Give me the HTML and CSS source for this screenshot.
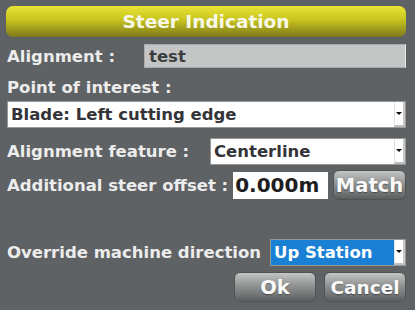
FILE: index.html
```html
<!DOCTYPE html>
<html>
<head>
<title>Steer Indication</title>
<link rel="stylesheet" href="styles.css">
</head>
<body>
<div class="dialog">
    <div class="title">Steer Indication</div>

    <div class="row row-alignment">
        <span class="label label-alignment">Alignment :</span>
        <span class="readonly">test</span>
    </div>

    <div class="label caption">Point of interest :</div>
    <div class="combo combo-full">
        <span class="combo-text">Blade: Left cutting edge</span>
        <span class="combo-arrow"></span>
    </div>

    <div class="row row-feature">
        <span class="label">Alignment feature :</span>
        <div class="combo combo-feature">
            <span class="combo-text">Centerline</span>
            <span class="combo-arrow"></span>
        </div>
    </div>

    <div class="row row-offset">
        <span class="label">Additional steer offset :</span>
        <span class="field">0.000m</span>
        <span class="button button-match">Match</span>
    </div>

    <div class="row row-override">
        <span class="label">Override machine direction</span>
        <div class="combo combo-direction">
            <span class="combo-text">Up Station</span>
            <span class="combo-arrow"></span>
        </div>
    </div>

    <div class="row row-buttons">
        <span class="button button-ok">Ok</span>
        <span class="button button-cancel">Cancel</span>
    </div>
</div>
</body>
</html>
```

FILE: styles.css
```css
html, body {
    margin: 0;
    padding: 0;
}

body {
    width: 415px;
    height: 310px;
    background-color: rgb(95, 98, 100);
    font-family: "DejaVu Sans", sans-serif;
    font-weight: bold;
    font-size: 16.5px;
    color: rgb(236, 236, 236);
    overflow: hidden;
}

.dialog {
    padding: 6px 9px 0 7px;
}

.title {
    height: 31px;
    line-height: 31px;
    margin-left: -1px;
    text-align: center;
    font-size: 18.5px;
    color: rgb(248, 248, 232);
    border-radius: 7px;
    background: linear-gradient(to bottom, rgb(234, 228, 52) 0%, rgb(200, 196, 30) 45%, rgb(124, 120, 28) 100%);
}

.row {
    display: flex;
    align-items: center;
}

.row-alignment {
    margin-top: 7px;
    height: 24px;
}

.label {
    white-space: nowrap;
}

.label-alignment {
    width: 137px;
}

.readonly {
    flex: 1;
    height: 24px;
    line-height: 23px;
    padding-left: 4px;
    box-sizing: border-box;
    background-color: rgb(196, 198, 198);
    border: 1px solid rgb(170, 172, 172);
    border-right-color: rgb(230, 232, 232);
    color: rgb(60, 62, 64);
}

.caption {
    margin-top: 9px;
    height: 22px;
    line-height: 22px;
}

.combo {
    display: flex;
    height: 27px;
    box-sizing: border-box;
    background-color: rgb(255, 255, 255);
    border: 1px solid rgb(150, 152, 152);
    color: rgb(52, 52, 56);
}

.combo-text {
    flex: 1;
    line-height: 25px;
    padding-left: 3px;
    white-space: nowrap;
}

.combo-arrow {
    width: 8px;
    position: relative;
    border-left: 1px solid rgb(225, 225, 225);
    border-right: 2px solid rgb(200, 200, 200);
    border-bottom: 2px solid rgb(190, 190, 190);
}

.combo-arrow::after {
    content: "";
    position: absolute;
    left: 1px;
    top: 10px;
    border-left: 3px solid transparent;
    border-right: 3px solid transparent;
    border-top: 3px solid rgb(10, 10, 10);
}

.combo-full {
    margin-top: 2px;
}

.row-feature {
    margin-top: 10px;
    justify-content: space-between;
}

.combo-feature {
    width: 196px;
}

.row-offset {
    margin-top: 5px;
    height: 30px;
}

.field {
    width: 95px;
    height: 27px;
    line-height: 27px;
    margin-left: 5px;
    padding-left: 2px;
    box-sizing: border-box;
    background-color: rgb(255, 255, 255);
    color: rgb(30, 30, 34);
    font-size: 20px;
    white-space: nowrap;
    overflow: hidden;
}

.button {
    display: inline-block;
    height: 30px;
    line-height: 29px;
    text-align: center;
    box-sizing: border-box;
    border-radius: 6px;
    color: rgb(250, 250, 250);
    font-size: 19.5px;
    background: linear-gradient(to bottom, rgb(196, 198, 198) 0%, rgb(150, 152, 152) 40%, rgb(92, 94, 96) 100%);
    border: 1px solid rgb(80, 82, 84);
    text-shadow: 0 1px 1px rgba(0, 0, 0, 0.35);
}

.button-match {
    width: 73px;
    margin-left: auto;
}

.row-override {
    margin-top: 39px;
    justify-content: space-between;
}

.combo-direction {
    width: 136px;
    background-color: rgb(26, 128, 212);
    color: rgb(255, 255, 255);
}

.combo-direction .combo-arrow {
    background-color: rgb(255, 255, 255);
}

.row-buttons {
    margin-top: 6px;
    justify-content: flex-end;
    gap: 8px;
}

.button-ok,
.button-cancel {
    width: 82px;
}

.button-cancel {
    font-size: 18.5px;
}
```
